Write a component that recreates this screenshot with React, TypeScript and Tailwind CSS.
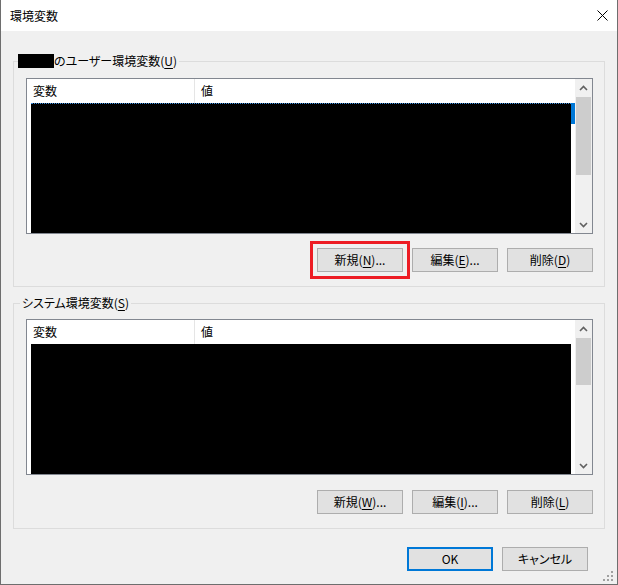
import React from 'react'

const Key = ({ c }: { c: string }) => <span className="underline underline-offset-[2px]">{c}</span>

function Btn({ text, mn, tail = ')...', marked = false }: { text: string; mn: string; tail?: string; marked?: boolean }) {
  return (
    <button
      className={
        'h-[24px] w-[86px] border border-[#adadad] bg-[#e1e1e1] flex items-center justify-center leading-none ' +
        (marked ? 'outline-[3px] outline-solid outline-[#ed1c24] outline-offset-[4px]' : '')
      }
    >
      <span>
        {text}(<Key c={mn} />{tail}
      </span>
    </button>
  )
}

function Chevron({ up }: { up: boolean }) {
  return (
    <svg width="9" height="6" viewBox="0 0 9 6">
      <polyline
        points={up ? '1,5 4.5,1.5 8,5' : '1,1 4.5,4.5 8,1'}
        fill="none"
        stroke="#606060"
        strokeWidth="1.6"
      />
    </svg>
  )
}

function ListView({ thumb, selected }: { thumb: number; selected: boolean }) {
  return (
    <div className="h-[156px] border border-[#828790] bg-white flex">
      <div className="flex-1 flex flex-col">
        <div className="h-[24px] flex shrink-0">
          <div className="w-[168px] border-r border-[#e5e5e5] pl-[6px] flex items-center">変数</div>
          <div className="pl-[6px] flex items-center">値</div>
        </div>
        <div className="flex-1 flex pl-[4px]">
          <div className={'flex-1 bg-black ' + (selected ? 'border-t border-dotted border-[#3d8ee0]' : '')} />
          <div className="w-[4px]">{selected && <div className="h-[21px] bg-[#0078d7]" />}</div>
        </div>
      </div>
      <div className="w-[17px] bg-[#f0f0f0] flex flex-col">
        <div className="h-[17px] flex items-center justify-center">
          <Chevron up />
        </div>
        <div className="mx-[1px] mt-[1px] bg-[#cdcdcd]" style={{ height: thumb }} />
        <div className="flex-1" />
        <div className="h-[17px] flex items-center justify-center">
          <Chevron up={false} />
        </div>
      </div>
    </div>
  )
}

export default function App() {
  return (
    <div className="relative w-[618px] h-[585px] flex flex-col border-x border-b border-[#6e6e6e] bg-[#f0f0f0] text-[12px] text-black font-['Noto_Sans_CJK_JP',sans-serif] [font-feature-settings:'palt']">
      <div className="h-[31px] shrink-0 bg-white flex items-center justify-between pl-[9px] pr-[9px]">
        <span>環境変数</span>
        <svg width="11" height="11" viewBox="0 0 11 11">
          <path d="M0.5 0.5 L10.5 10.5 M10.5 0.5 L0.5 10.5" stroke="#000" strokeWidth="1" />
        </svg>
      </div>

      <div className="flex-1 flex flex-col px-3">
        <fieldset className="mt-[22px] border border-[#dcdcdc] p-0">
          <legend className="ml-[4px] leading-[16px] pr-[2px]">
            <span className="inline-block w-[36px] h-[14px] bg-black align-[-2px]" />
            のユーザー環境変数(<Key c="U" />)
          </legend>
          <div className="pl-[12px] pr-[11px] pt-[9px] pb-[14px]">
            <ListView thumb={78} selected />
            <div className="mt-[14px] flex justify-end gap-[9px]">
              <Btn text="新規" mn="N" marked />
              <Btn text="編集" mn="E" />
              <Btn text="削除" mn="D" tail=")" />
            </div>
          </div>
        </fieldset>

        <fieldset className="mt-[8px] border border-[#dcdcdc] p-0">
          <legend className="ml-[6px] leading-[16px] px-[2px]">
            システム環境変数(<Key c="S" />)
          </legend>
          <div className="pl-[12px] pr-[11px] pt-[8px] pb-[14px]">
            <ListView thumb={47} selected={false} />
            <div className="mt-[15px] flex justify-end gap-[9px]">
              <Btn text="新規" mn="W" />
              <Btn text="編集" mn="I" />
              <Btn text="削除" mn="L" tail=")" />
            </div>
          </div>
        </fieldset>

        <div className="mt-[18px] flex justify-end gap-[9px] pr-[17px]">
          <button className="h-[24px] w-[86px] border-2 border-[#0078d7] bg-[#e1e1e1] leading-none">OK</button>
          <button className="h-[24px] w-[86px] border border-[#adadad] bg-[#e1e1e1] leading-none">キャンセル</button>
        </div>
      </div>

      <svg className="absolute right-[3px] bottom-[2px]" width="11" height="11" viewBox="0 0 11 11">
        <g fill="#a0a0a0">
          <rect x="8" y="0" width="2" height="2" />
          <rect x="4" y="4" width="2" height="2" />
          <rect x="8" y="4" width="2" height="2" />
          <rect x="0" y="8" width="2" height="2" />
          <rect x="4" y="8" width="2" height="2" />
          <rect x="8" y="8" width="2" height="2" />
        </g>
      </svg>
    </div>
  )
}
